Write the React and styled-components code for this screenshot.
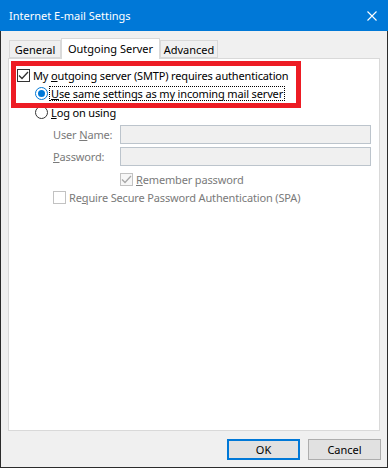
import styled, { createGlobalStyle } from "styled-components"

const Global = createGlobalStyle`
  html, body {
    margin: 0;
    padding: 0;
    background: #f0f0f0;
  }
  body {
    font-family: "Noto Sans", "Open Sans", sans-serif;
    font-size: 11px;
    color: #000;
  }
`

const Window = styled.div`
  width: 388px;
  height: 468px;
  display: flex;
  flex-direction: column;
  box-sizing: border-box;
`

const TitleBar = styled.div`
  height: 31px;
  flex: none;
  background: #0078d7;
  color: #fff;
  display: flex;
  align-items: center;
  justify-content: space-between;
  padding: 0 11px 0 9px;
`

const Title = styled.span`
  font-size: 11px;
  line-height: 1;
`

const Frame = styled.div`
  flex: 1;
  display: flex;
  flex-direction: column;
  border: 1px solid #2b2b2b;
  border-top: none;
  background: #f0f0f0;
  padding: 7px 6px 7px 7px;
  min-height: 0;
`

const TabRow = styled.div`
  display: flex;
  align-items: flex-end;
  height: 20px;
  padding-left: 1px;
  position: relative;
  z-index: 1;
`

const Tab = styled.div`
  box-sizing: border-box;
  width: ${(p) => p.$w}px;
  border: 1px solid #d9d9d9;
  border-bottom: ${(p) => (p.$active ? "none" : "1px solid #d9d9d9")};
  background: ${(p) => (p.$active ? "#fff" : "#f0f0f0")};
  height: ${(p) => (p.$active ? "21px" : "18px")};
  margin-bottom: ${(p) => (p.$active ? "-1px" : "0")};
  padding: ${(p) => (p.$active ? "0 0 2px" : "1px 0 0")};
  display: flex;
  align-items: center;
  justify-content: center;
  line-height: 1;
  position: relative;
  z-index: ${(p) => (p.$active ? 2 : 0)};
`

const Pane = styled.div`
  flex: 1;
  background: #fff;
  border: 1px solid #d9d9d9;
  margin-right: 1px;
  position: relative;
  padding: 7px 0 0 8px;
  display: flex;
  flex-direction: column;
  letter-spacing: -0.15px;
`

const Highlight = styled.div`
  position: absolute;
  left: 2px;
  top: 2px;
  width: 290px;
  height: 47px;
  box-sizing: border-box;
  border: 5px solid #ed1c24;
  pointer-events: none;
`

const Row = styled.div`
  display: flex;
  align-items: center;
  height: ${(p) => p.$h || 18}px;
  margin-left: ${(p) => p.$indent || 0}px;
  margin-top: ${(p) => p.$top || 0}px;
  gap: 3px;
  color: ${(p) => (p.$disabled ? "#7a7a7a" : "#000")};
  white-space: nowrap;
`

const Box = styled.span`
  width: 13px;
  height: 13px;
  box-sizing: border-box;
  flex: none;
  border: 1px solid ${(p) => (p.$disabled ? "#c2c2c2" : "#333")};
  background: ${(p) => (p.$disabled && p.$checked ? "#f7f7f7" : "#fff")};
  display: flex;
  align-items: center;
  justify-content: center;
`

const Radio = styled.span`
  width: 13px;
  height: 13px;
  box-sizing: border-box;
  flex: none;
  border-radius: 50%;
  border: 1px solid ${(p) => (p.$checked ? "#0078d7" : "#333")};
  background: #fff;
  display: flex;
  align-items: center;
  justify-content: center;

  &::after {
    content: "";
    display: ${(p) => (p.$checked ? "block" : "none")};
    width: 7px;
    height: 7px;
    border-radius: 50%;
    background: #0078d7;
  }
`

const Focus = styled.span`
  outline: 1px dotted #000;
  outline-offset: 0;
  padding: 0 1px;
  line-height: 13px;
  margin-left: -1px;
`

const FieldRow = styled.div`
  display: flex;
  align-items: center;
  margin-left: 36px;
  margin-top: 3px;
  height: 19px;
`

const Label = styled.span`
  width: 67px;
  flex: none;
  color: #7a7a7a;
`

const Input = styled.div`
  width: 251px;
  height: 19px;
  box-sizing: border-box;
  border: 1px solid #bcc4cc;
  background: #f0f0f0;
`

const Footer = styled.div`
  display: flex;
  justify-content: flex-end;
  gap: 8px;
  margin-top: 8px;
`

const Button = styled.button`
  width: 73px;
  height: 21px;
  box-sizing: border-box;
  font: inherit;
  font-size: 11px;
  color: #000;
  background: #e1e1e1;
  border: ${(p) => (p.$default ? "2px solid #0078d7" : "1px solid #adadad")};
  padding: 0;
  line-height: 1;
`

const Check = ({ color }) => (
  <svg width="11" height="11" viewBox="0 0 11 11">
    <path d="M1 5.5 L4 8.5 L10 2" fill="none" stroke={color} strokeWidth="1.3" />
  </svg>
)

const CheckBox = ({ checked, disabled }) => (
  <Box $checked={checked} $disabled={disabled}>
    {checked && <Check color={disabled ? "#a8a8a8" : "#333"} />}
  </Box>
)

export default function App() {
  return (
    <>
      <Global />
      <Window>
        <TitleBar>
          <Title>Internet E-mail Settings</Title>
          <svg width="10" height="10" viewBox="0 0 10 10">
            <path d="M0.5 0.5 L9.5 9.5 M9.5 0.5 L0.5 9.5" stroke="#fff" strokeWidth="1.1" />
          </svg>
        </TitleBar>
        <Frame>
          <TabRow>
            <Tab $w={52}>General</Tab>
            <Tab $active $w={99}>Outgoing Server</Tab>
            <Tab $w={58}>Advanced</Tab>
          </TabRow>
          <Pane>
            <Row>
              <CheckBox checked />
              <span>
                My <u>o</u>utgoing server (SMTP) requires authentication
              </span>
            </Row>
            <Row $indent={18} $h={19}>
              <Radio $checked />
              <Focus>
                <u>U</u>se same settings as my incoming mail server
              </Focus>
            </Row>
            <Row $indent={18} $h={19}>
              <Radio />
              <span>
                <u>L</u>og on using
              </span>
            </Row>
            <FieldRow>
              <Label>
                User <u>N</u>ame:
              </Label>
              <Input />
            </FieldRow>
            <FieldRow>
              <Label>
                <u>P</u>assword:
              </Label>
              <Input />
            </FieldRow>
            <Row $indent={103} $top={4} $disabled>
              <CheckBox checked disabled />
              <span>
                <u>R</u>emember password
              </span>
            </Row>
            <Row $indent={36} $disabled>
              <CheckBox disabled />
              <span>
                Re<u>q</u>uire Secure Password Authentication (SPA)
              </span>
            </Row>
            <Highlight />
          </Pane>
          <Footer>
            <Button $default>OK</Button>
            <Button>Cancel</Button>
          </Footer>
        </Frame>
      </Window>
    </>
  )
}
